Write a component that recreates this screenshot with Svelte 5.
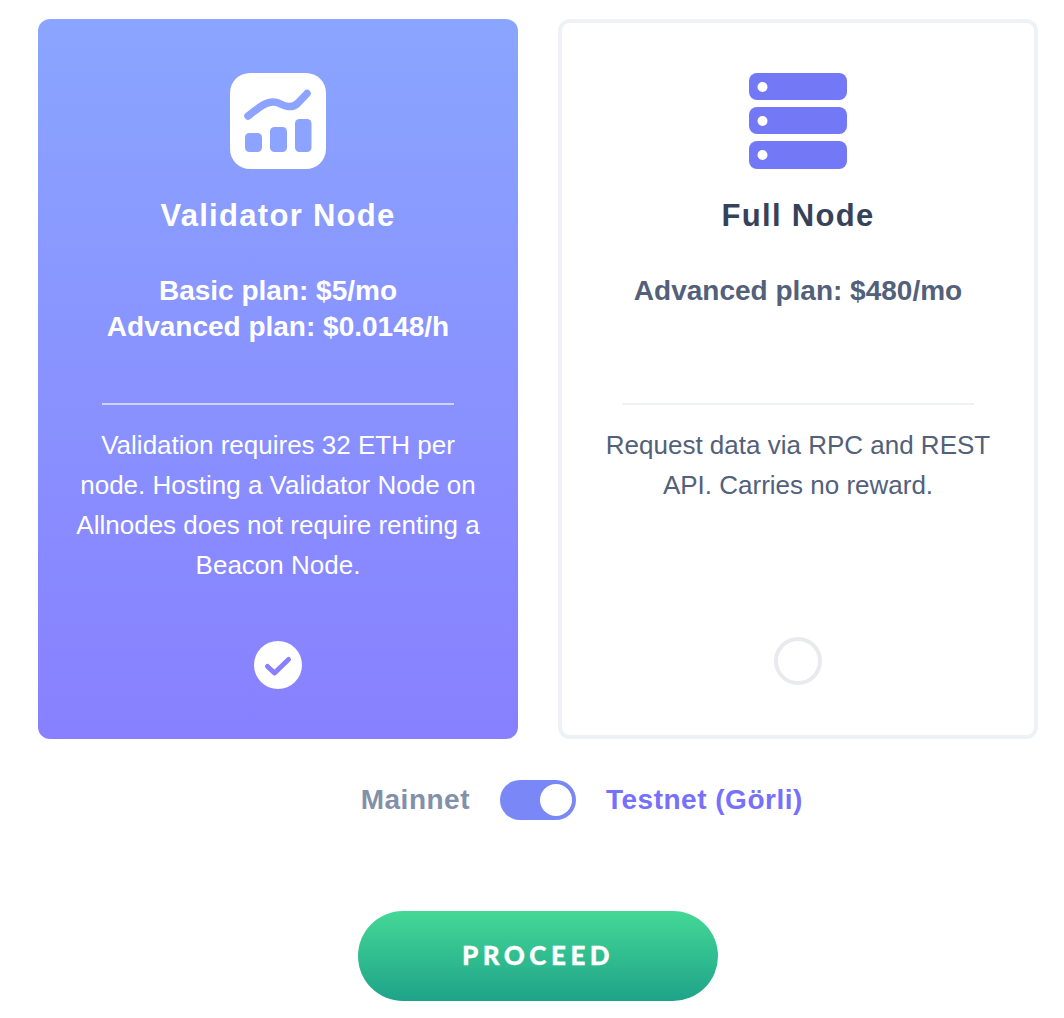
<script lang="ts">
  const nodes = [
    {
      id: 'validator',
      title: 'Validator Node',
      prices: ['Basic plan: $5/mo', 'Advanced plan: $0.0148/h'],
      desc: 'Validation requires 32 ETH per node. Hosting a Validator Node on Allnodes does not require renting a Beacon Node.'
    },
    {
      id: 'full',
      title: 'Full Node',
      prices: ['Advanced plan: $480/mo'],
      desc: 'Request data via RPC and REST API. Carries no reward.'
    }
  ];

  let selected = $state('validator');
  let testnet = $state(true);
</script>

<div class="page">
  <div class="cards">
    {#each nodes as node (node.id)}
      <button class="card {selected === node.id ? 'active' : ''}" type="button" onclick={() => selected = node.id}>
        {#if node.id === 'validator'}
          <svg class="icon" width="96" height="96" viewBox="0 0 96 96">
            <rect width="96" height="96" rx="20" fill="#fff" />
            <rect x="15" y="60" width="17" height="19" rx="4.500" fill="#8ca3ff" />
            <rect x="40" y="54" width="17" height="25" rx="4.500" fill="#8ca3ff" />
            <rect x="65" y="46" width="16.500" height="33" rx="4.500" fill="#8ca3ff" />
            <path d="M18 43 C22 40 28 35 33 32 C38 29 42 28 47 29.500 C51 31 54 33 58 33.500 C62 34 65 33 68 30 L77 20.500" fill="none" stroke="#8ca3ff" stroke-width="7.500" stroke-linecap="round" stroke-linejoin="round" />
          </svg>
        {:else}
          <svg class="icon" width="98" height="96" viewBox="0 0 98 96">
            <rect y="0" width="98" height="27" rx="8" fill="#7278f6" />
            <rect y="34" width="98" height="27" rx="8" fill="#7278f6" />
            <rect y="68" width="98" height="28" rx="8" fill="#7278f6" />
            <circle cx="13.500" cy="14" r="5" fill="#fff" />
            <circle cx="13.500" cy="48" r="5" fill="#fff" />
            <circle cx="13.500" cy="82" r="5" fill="#fff" />
          </svg>
        {/if}
        <h2 class="title">{node.title}</h2>
        <div class="prices">
          {#each node.prices as price}
            <div>{price}</div>
          {/each}
        </div>
        <hr class="divider" />
        <p class="desc">{node.desc}</p>
        <span class="mark">
          {#if selected === node.id}
            <svg width="48" height="48" viewBox="0 0 48 48">
              <circle cx="24" cy="24" r="24" fill="#fff" />
              <path d="M13.500 25.500 L20.500 32 L34.500 18.500" fill="none" stroke="#8880ff" stroke-width="5" stroke-linecap="round" stroke-linejoin="round" />
            </svg>
          {/if}
        </span>
      </button>
    {/each}
  </div>

  <div class="network">
    <span class="net-label">Mainnet</span>
    <button class="toggle {testnet ? 'on' : ''}" type="button" aria-label="Toggle network" onclick={() => testnet = !testnet}>
      <span class="knob"></span>
    </button>
    <span class="net-label testnet">Testnet (Görli)</span>
  </div>

  <button class="proceed" type="button">PROCEED</button>
</div>

<style>
  :global(body) { margin: 0; background: #fff; font-family: "Liberation Sans", Arial, sans-serif; }

  .page {
    width: 1000px;
    height: 1018px;
    box-sizing: border-box;
    margin-left: 38px;
    padding-top: 19px;
    display: flex;
    flex-direction: column;
    align-items: center;
  }

  .cards { display: flex; gap: 40px; width: 100%; }

  .card {
    width: 480px;
    height: 720px;
    box-sizing: border-box;
    padding: 50px 0 0;
    border: 4px solid #eef1f5;
    border-radius: 12px;
    background: #fff;
    color: #536079;
    font-family: inherit;
    display: flex;
    flex-direction: column;
    align-items: center;
    cursor: pointer;
  }
  .card.active {
    padding-top: 54px;
    border: none;
    background: linear-gradient(180deg, #8aa5ff 0%, #8880ff 100%);
    color: #fff;
  }

  .icon { display: block; flex-shrink: 0; }

  .title {
    margin: 27px 0 0;
    font-size: 31px;
    line-height: 40px;
    font-weight: 700;
    letter-spacing: 1.300px;
    color: #36425a;
  }
  .card.active .title { color: #fff; }

  .prices {
    margin-top: 37px;
    height: 107px;
    font-size: 28px;
    line-height: 36px;
    font-weight: 700;
    text-align: center;
  }

  .divider {
    width: 352px;
    height: 2px;
    margin: 23px 0 0;
    border: none;
    background: #eef1f5;
  }
  .card.active .divider { background: rgba(255,255,255,0.6); }

  .desc {
    margin: 20px 0 0;
    width: 416px;
    font-size: 26px;
    line-height: 40px;
    text-align: center;
  }

  .mark {
    margin-top: auto;
    margin-bottom: 50px;
    width: 48px;
    height: 48px;
    box-sizing: border-box;
    border: 4px solid #e8eaed;
    border-radius: 50%;
  }
  .card.active .mark { border: none; }
  .mark svg { display: block; }

  .network {
    margin-top: 41px;
    height: 40px;
    width: 100%;
    display: grid;
    grid-template-columns: 1fr 76px 1fr;
    column-gap: 30px;
    align-items: center;
  }
  .net-label {
    font-size: 28px;
    font-weight: 700;
    letter-spacing: 0.500px;
    color: #8290aa;
    text-align: right;
  }
  .net-label.testnet { color: #7670fb; text-align: left; }

  .toggle {
    width: 76px;
    height: 40px;
    padding: 4px;
    border: none;
    border-radius: 20px;
    background: #7a87f7;
    display: flex;
    cursor: pointer;
  }
  .toggle.on { justify-content: flex-end; }
  .knob { width: 32px; height: 32px; border-radius: 50%; background: #fff; }

  .proceed {
    margin-top: 91px;
    width: 360px;
    height: 90px;
    padding: 0 0 2px;
    border: none;
    border-radius: 45px;
    background: linear-gradient(180deg, #44d896 0%, #1ea389 100%);
    color: #fff;
    font-family: Lato, "Liberation Sans", sans-serif;
    font-size: 26px;
    font-weight: 900;
    letter-spacing: 4.500px;
    -webkit-text-stroke: 0.300px #fff;
    cursor: pointer;
  }
</style>
